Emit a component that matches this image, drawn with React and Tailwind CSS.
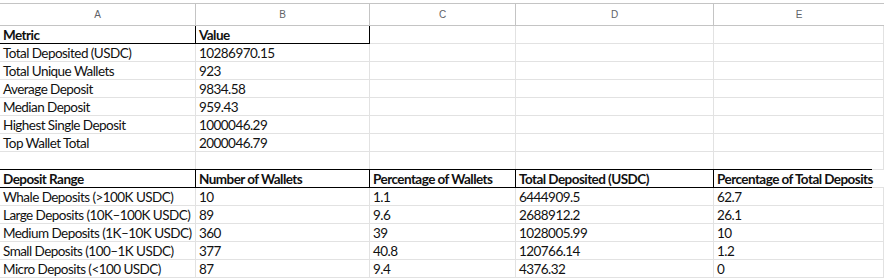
import React from "react";

const COLS = [
  { key: "A", width: "w-[196px]" },
  { key: "B", width: "w-[174px]" },
  { key: "C", width: "w-[146px]" },
  { key: "D", width: "w-[198px]" },
  { key: "E", width: "flex-1" },
];

const ROWS = [
  { cells: ["Metric", "Value"], kind: "metricHead" },
  { cells: ["Total Deposited (USDC)", "10286970.15"] },
  { cells: ["Total Unique Wallets", "923"] },
  { cells: ["Average Deposit", "9834.58"] },
  { cells: ["Median Deposit", "959.43"] },
  { cells: ["Highest Single Deposit", "1000046.29"] },
  { cells: ["Top Wallet Total", "2000046.79"] },
  { cells: [], kind: "spacer" },
  {
    cells: ["Deposit Range", "Number of Wallets", "Percentage of Wallets", "Total Deposited (USDC)", "Percentage of Total Deposits"],
    kind: "rangeHead",
  },
  { cells: ["Whale Deposits (>100K USDC)", "10", "1.1", "6444909.5", "62.7"] },
  { cells: ["Large Deposits (10K–100K USDC)", "89", "9.6", "2688912.2", "26.1"] },
  { cells: ["Medium Deposits (1K–10K USDC)", "360", "39", "1028005.99", "10"] },
  { cells: ["Small Deposits (100–1K USDC)", "377", "40.8", "120766.14", "1.2"] },
  { cells: ["Micro Deposits (<100 USDC)", "87", "9.4", "4376.32", "0"] },
];

function cellClasses(row, i) {
  const kind = row.kind;
  if (kind === "metricHead" && i < 2) {
    return "h-[18px] border-r border-b border-r-black border-b-black font-bold";
  }
  if (kind === "spacer") {
    return "h-[17px] border-r border-[#e2e2e2]";
  }
  if (kind === "rangeHead") {
    return "h-[19px] border-y border-r border-black font-bold";
  }
  return "h-[18px] border-r border-b border-[#e2e2e2]";
}

function Cell({ row, i }) {
  const text = row.cells[i] ?? "";
  if (row.kind === "rangeHead" && i === 4) {
    return (
      <div className={`${COLS[i].width} flex h-[19px] font-bold`}>
        <div className="flex w-[158px] items-end whitespace-nowrap border-y border-black pb-[1px] pl-[3px]">
          {text}
        </div>
        <div className="flex-1 border-y border-[#e2e2e2]" />
      </div>
    );
  }
  return (
    <div
      className={`${COLS[i].width} ${cellClasses(row, i)} flex items-end overflow-visible whitespace-nowrap pb-[1px] pl-[3px]`}
    >
      {text}
    </div>
  );
}

export default function App() {
  return (
    <div className="h-[280px] w-[884px] overflow-hidden bg-white pt-[3px]">
      <div className="flex h-[23px] border-y border-[#c4c4c4] font-['Liberation_Sans',Arial,sans-serif] text-[10px] text-[#5f6368]">
        {COLS.map((col, i) => (
          <div
            key={col.key}
            className={`${col.width} flex items-center justify-center ${i < 4 ? "border-r border-[#c4c4c4]" : ""}`}
          >
            {col.key}
          </div>
        ))}
      </div>
      <div className="font-['Lato','Noto_Sans',sans-serif] text-[13.5px] leading-none tracking-[-0.55px] text-[#111]">
        {ROWS.map((row, r) => (
          <div key={r} className="flex">
            {COLS.map((col, i) => (
              <Cell key={col.key} row={row} i={i} />
            ))}
          </div>
        ))}
      </div>
    </div>
  );
}
